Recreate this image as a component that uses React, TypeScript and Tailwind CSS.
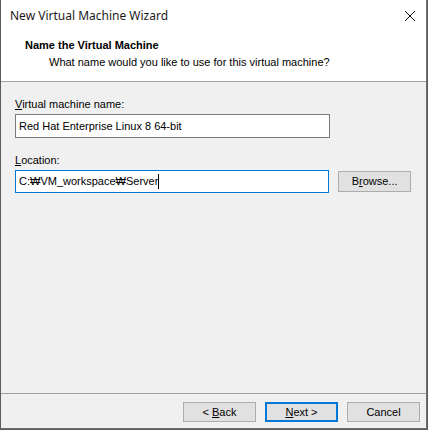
import React from 'react';

const uiFont = { fontFamily: '"Liberation Sans", "Noto Sans CJK KR", sans-serif' };
const titleFont = { fontFamily: '"Noto Sans", "Liberation Sans", sans-serif' };

function Btn({ children, primary }: { children: React.ReactNode; primary?: boolean }) {
  return (
    <button
      className={
        primary
          ? 'w-[73px] h-[20px] bg-[#e1e1e1] border-2 border-[#0078d7] text-[11px] leading-none text-black'
          : 'w-[73px] h-[20px] bg-[#e1e1e1] border border-[#adadad] text-[11px] leading-none text-black'
      }
    >
      {children}
    </button>
  );
}

export default function App() {
  return (
    <div className="w-[428px] h-[430px] bg-[#5c5c5c] flex" style={uiFont}>
      <div className="ml-[1px] w-[426px] h-[429px] border-r border-b border-[#707070] bg-[#f0f0f0] flex flex-col">
        {/* title bar + header */}
        <div className="bg-white h-[82px] border-b border-[#a0a0a0] flex flex-col">
          <div className="h-[31px] flex items-center justify-between pl-[9px] pr-[9px]">
            <span className="text-[12px] text-[#1a1a1a]" style={titleFont}>
              New Virtual Machine Wizard
            </span>
            <svg width="12" height="12" viewBox="0 0 12 12" className="mr-[1px]">
              <path d="M1 1 L11 11 M11 1 L1 11" stroke="#111" strokeWidth="1" />
            </svg>
          </div>
          <div className="pl-[24px] pt-[7px] text-[11px] font-bold leading-[14px] text-black">Name the Virtual Machine</div>
          <div className="pl-[48px] pt-[3px] text-[11px] leading-[14px] text-black">
            What name would you like to use for this virtual machine?
          </div>
        </div>

        {/* body */}
        <div className="flex-1 flex flex-col pl-[14px] pr-[15px] pt-[15px]">
          <div className="text-[11px] leading-[14px] text-black">
            <span className="underline">V</span>irtual machine name:
          </div>
          <div className="mt-[3px] w-[315px] h-[24px] bg-white border border-[#7a7a7a] flex items-center px-[3px] text-[11px] text-black">
            Red Hat Enterprise Linux 8 64-bit
          </div>
          <div className="mt-[15px] text-[11px] leading-[14px] text-black">
            <span className="underline">L</span>ocation:
          </div>
          <div className="mt-[3px] flex items-center gap-[9px]">
            <div className="w-[315px] h-[23px] bg-white border border-[#0078d7] flex items-center px-[3px] text-[11px] text-black">
              <span>C:₩VM_workspace₩Server</span>
              <span className="w-[1px] h-[15px] bg-black" />
            </div>
            <button className="w-[73px] h-[21px] bg-[#e1e1e1] border border-[#adadad] text-[11px] leading-none text-black">
              B<span className="underline">r</span>owse...
            </button>
          </div>
        </div>

        {/* footer */}
        <div className="h-[35px] border-t border-[#a0a0a0] flex items-start justify-end gap-[9px] pt-[8px] pr-[6px]">
          <Btn>
            &lt; <span className="underline">B</span>ack
          </Btn>
          <Btn primary>
            <span className="underline">N</span>ext &gt;
          </Btn>
          <Btn>Cancel</Btn>
        </div>
      </div>
    </div>
  );
}
